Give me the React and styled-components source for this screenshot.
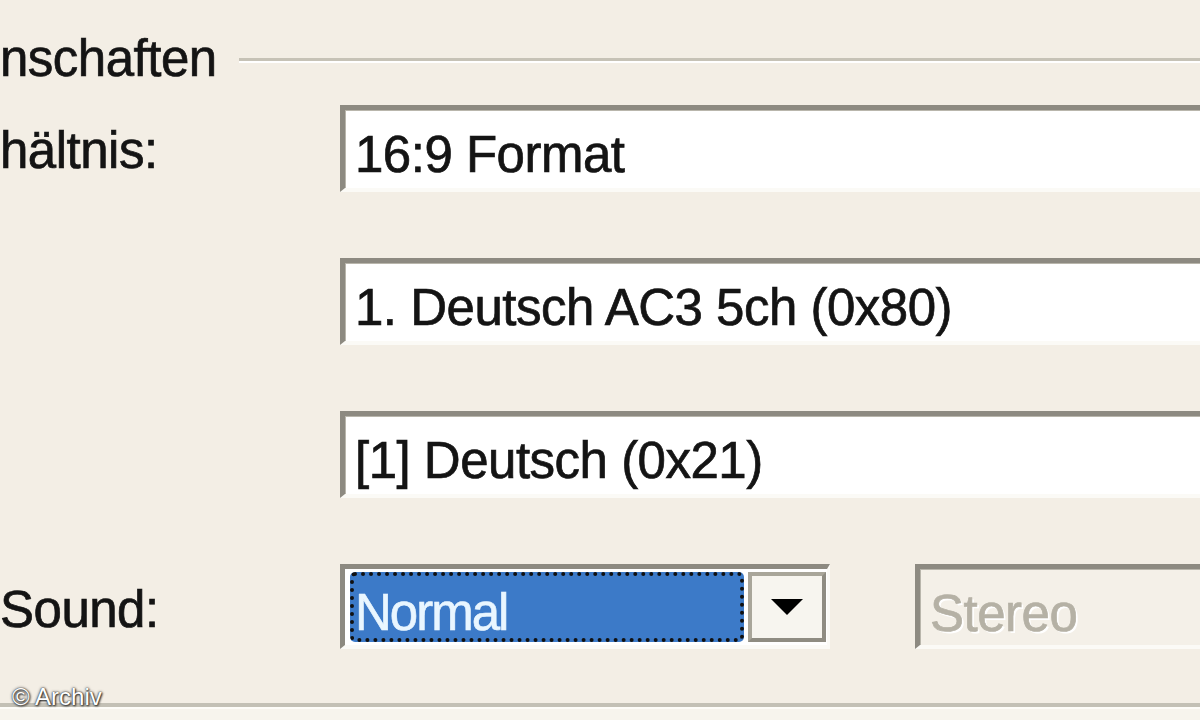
import React from "react";
import styled, { createGlobalStyle } from "styled-components";

const Global = createGlobalStyle`
  html, body { margin: 0; padding: 0; background: #f3eee5; }
  * { box-sizing: border-box; }
`;

const Page = styled.div`
  width: 1200px;
  height: 720px;
  overflow: hidden;
  position: relative;
  display: flex;
  flex-direction: column;
  padding-top: 29px;
  background: #f3eee5;
  font-family: "Liberation Sans", Arial, sans-serif;
  color: #141414;
`;

const GroupHeader = styled.div`
  display: flex;
  align-items: center;
  height: 60px;
  margin-bottom: 16px;
`;

const Legend = styled.span`
  font-size: 51px;
  line-height: 60px;
  letter-spacing: -0.5px;
  -webkit-text-stroke: 0.7px #141414;
  white-space: nowrap;
`;

const GroupLine = styled.div`
  flex: 1;
  margin-left: 22px;
  height: 0;
  border-top: 3px solid #c6c2b6;
  border-bottom: 2px solid #ffffff;
  margin-top: 2px;
`;

const Rows = styled.div`
  display: flex;
  flex-direction: column;
  gap: 66px;
`;

const Row = styled.div`
  display: grid;
  grid-template-columns: 340px 1fr;
  align-items: start;
  height: 87px;
`;

const Label = styled.div`
  font-size: 51px;
  line-height: 60px;
  letter-spacing: -0.5px;
  -webkit-text-stroke: 0.7px #141414;
  padding-top: 16px;
  white-space: nowrap;
`;

const Field = styled.div`
  height: 87px;
  margin-right: -30px;
  background: ${(p) => (p.$disabled ? "#f4f0e8" : "#ffffff")};
  border-style: solid;
  border-width: 5px 4px 4px 5px;
  border-color: #8d8a81 #fbfaf6 #fbfaf6 #8d8a81;
  box-shadow: inset 1px 1px 0 #b9b6ac;
  padding: 15px 10px 0;
  font-size: 51px;
  line-height: 60px;
  letter-spacing: -0.5px;
  white-space: nowrap;
  color: ${(p) => (p.$disabled ? "#b5b1a5" : "#141414")};
  -webkit-text-stroke: 0.7px ${(p) => (p.$disabled ? "#b5b1a5" : "#141414")};
  text-shadow: ${(p) => (p.$disabled ? "2px 2px 0 #ffffff" : "none")};
`;

const ComboRow = styled.div`
  display: flex;
  align-items: start;
  gap: 85px;
`;

const Combo = styled.div`
  width: 490px;
  height: 85px;
  flex: none;
  display: flex;
  gap: 4px;
  padding: 3px 1px 3px 5px;
  background: #ffffff;
  border-style: solid;
  border-width: 5px 3px 4px 5px;
  border-color: #8d8a81 #fbfaf6 #fbfaf6 #8d8a81;
`;

const Selection = styled.div`
  flex: 1;
  background: #3c7ac8;
  border: 4px dotted #111111;
  border-radius: 5px;
  color: #e9f6ff;
  -webkit-text-stroke: 0.6px #e9f6ff;
  font-size: 51px;
  line-height: 60px;
  letter-spacing: -2px;
  padding: 7px 0 0 1px;
  white-space: nowrap;
`;

const DropButton = styled.div`
  width: 78px;
  flex: none;
  background: #f7f5ef;
  border: 4px solid #a9a69a;
  border-right-color: #8f8c82;
  border-bottom-color: #8f8c82;
  display: flex;
  align-items: center;
  justify-content: center;
`;

const Disabled = styled(Field)`
  flex: 1;
  height: 85px;
  margin-right: -30px;
`;

const Spacer = styled.div`
  flex: 1;
`;

const Separator = styled.div`
  height: 0;
  border-top: 4px solid #c3c0b5;
  border-bottom: 2px solid #fdfcf8;
`;

const Footer = styled.div`
  height: 11px;
  background: #f7f4ed;
`;

const Watermark = styled.div`
  position: absolute;
  left: 12px;
  bottom: 11px;
  font-family: "Liberation Sans", Arial, sans-serif;
  font-size: 24px;
  line-height: 24px;
  color: #ffffff;
  text-shadow: 0 0 3px #2e2e2e, 1px 1px 2px #2e2e2e, 0 0 1px #2e2e2e;
`;

export default function App() {
  return (
    <Page>
      <Global />
      <GroupHeader>
        <Legend>nschaften</Legend>
        <GroupLine />
      </GroupHeader>
      <Rows>
        <Row>
          <Label>hältnis:</Label>
          <Field>16:9 Format</Field>
        </Row>
        <Row>
          <Label />
          <Field>1. Deutsch AC3 5ch (0x80)</Field>
        </Row>
        <Row>
          <Label />
          <Field>[1] Deutsch (0x21)</Field>
        </Row>
        <Row>
          <Label>Sound:</Label>
          <ComboRow>
            <Combo>
              <Selection>Normal</Selection>
              <DropButton>
                <svg width="34" height="18" viewBox="0 0 34 18">
                  <path d="M1 1 H33 L17 17 Z" fill="#000" />
                </svg>
              </DropButton>
            </Combo>
            <Disabled $disabled>Stereo</Disabled>
          </ComboRow>
        </Row>
      </Rows>
      <Spacer />
      <Separator />
      <Footer />
      <Watermark>© Archiv</Watermark>
    </Page>
  );
}
